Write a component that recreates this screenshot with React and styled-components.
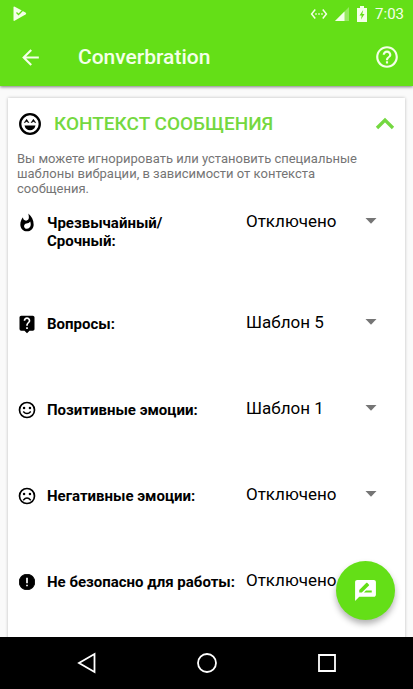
import React, { useState } from "react";
import styled, { createGlobalStyle } from "styled-components";
import {
  MdArrowBack,
  MdHelpOutline,
  MdLiveHelp,
  MdRateReview,
  MdSettingsEthernet,
  MdWhatshot,
} from "react-icons/md";

const GREEN = "#64df17";

const GlobalStyle = createGlobalStyle`
  * {
    box-sizing: border-box;
  }
  body {
    margin: 0;
    background: #fafafa;
    color: #000;
    font-family: Roboto, "Noto Sans", sans-serif;
  }
  svg {
    display: block;
    flex: none;
  }
`;

const Screen = styled.div`
  display: flex;
  flex-direction: column;
  height: 100vh;
  overflow: hidden;
`;

const Header = styled.header`
  flex: none;
  background: ${GREEN};
  color: #f4ffe9;
  box-shadow: 0 1px 3px rgba(0, 0, 0, 0.5);
  z-index: 1;
`;

const StatusBar = styled.div`
  display: flex;
  align-items: center;
  justify-content: space-between;
  height: 28px;
  padding: 0 9px 0 12px;
`;

const StatusIcons = styled.div`
  display: flex;
  align-items: center;
  gap: 7px;
`;

const Clock = styled.span`
  font-size: 15px;
  line-height: 20px;
`;

const Toolbar = styled.div`
  display: flex;
  align-items: center;
  height: 58px;
  padding: 0 13px 0 18px;
`;

const IconButton = styled.button`
  display: flex;
  padding: 0;
  border: 0;
  background: none;
  color: inherit;
`;

const AppTitle = styled.h1`
  flex: 1;
  margin: 0;
  padding-left: 35px;
  font-size: 21px;
  line-height: 28px;
  font-weight: 500;
`;

const Content = styled.main`
  flex: 1;
  min-height: 0;
  padding: 12px 8px 0;
  overflow: hidden;
`;

const Card = styled.section`
  min-height: 100%;
  padding: 12px 9px;
  background: #fff;
  box-shadow: 0 0 3px rgba(0, 0, 0, 0.25);
`;

const CardHeader = styled.div`
  display: flex;
  align-items: center;
  gap: 11px;
`;

const CardTitle = styled.h2`
  flex: 1;
  margin: 0;
  color: #74d840;
  font-size: 19px;
  line-height: 28px;
  font-weight: 500;
`;

const Collapse = styled(IconButton)`
  color: #74d840;
`;

const Hint = styled.p`
  margin: 13px 0 11px;
  padding-right: 32px;
  color: #757575;
  font-size: 13px;
  line-height: 15px;
`;

const Row = styled.div`
  display: grid;
  grid-template-columns: 20px 189px 1fr;
  column-gap: 10px;
  align-items: start;
  padding-bottom: 58px;
`;

const RowIcon = styled.span`
  padding-top: 6px;
`;

const Label = styled.label`
  padding-top: 7px;
  font-size: 15px;
  line-height: 18px;
  font-weight: 700;
  white-space: pre-line;
`;

const SelectBox = styled.div`
  display: flex;
  align-items: center;
  width: 131px;
  height: 28px;
`;

const Select = styled.select`
  flex: 1;
  min-width: 0;
  height: 28px;
  padding: 0;
  border: 0;
  background: none;
  appearance: none;
  color: #000;
  font-family: inherit;
  font-size: 17px;
`;

const Fab = styled.button`
  position: fixed;
  right: 18px;
  bottom: 69px;
  display: flex;
  align-items: center;
  justify-content: center;
  width: 59px;
  height: 59px;
  padding: 0;
  border: 0;
  border-radius: 50%;
  background: ${GREEN};
  color: #fff;
  box-shadow: 0 4px 6px rgba(0, 0, 0, 0.3);
`;

const NavBar = styled.nav`
  flex: none;
  display: flex;
  align-items: center;
  justify-content: center;
  gap: 96px;
  height: 52px;
  background: #000;
  color: #fff;
  z-index: 1;
`;

const PlayCheck = () => (
  <svg width="16" height="18" viewBox="0 0 16 18">
    <path d="M1.5 2.5Q1.500 1 2.800 1.700L13.500 7.500Q15 8.500 13.500 9.500L3 15.600Q1.500 16.400 1.500 15Z" fill="currentColor" />
    <path d="M4.500 7.500L6.500 9.500L11 5" fill="none" stroke={GREEN} strokeWidth="1.300" />
  </svg>
);

const Signal = () => (
  <svg width="14" height="14" viewBox="0 0 14 14">
    <path d="M14 0V14H0Z" fill="currentColor" opacity="0.35" />
    <path d="M9.500 4.500V14H0Z" fill="currentColor" />
  </svg>
);

const Battery = () => (
  <svg width="12" height="16" viewBox="0 0 12 16">
    <path d="M4 0h4v2h3v14H1V2h3Z" fill="currentColor" />
    <path d="M7.200 4L3.500 9.500H5.700L5 13.500L8.500 8H6.300Z" fill={GREEN} />
  </svg>
);

const Caret = () => (
  <svg width="12" height="6" viewBox="0 0 12 6">
    <path d="M0.500 0H11.500L6 5.800Z" fill="#757575" />
  </svg>
);

const Chevron = () => (
  <svg width="22" height="22" viewBox="0 0 22 22" fill="none" stroke="currentColor" strokeWidth="3.300">
    <path d="M3 15L11 7L19 15" />
  </svg>
);

const LaughingFace = () => (
  <svg width="26" height="26" viewBox="0 0 26 26">
    <circle cx="13" cy="13" r="9.800" fill="none" stroke="currentColor" strokeWidth="2.300" />
    <path
      d="M7.300 11.700L9.600 8.300L11.900 11.700L9.600 10.500ZM14.100 11.700L16.400 8.300L18.700 11.700L16.400 10.500Z"
      fill="currentColor"
      stroke="currentColor"
      strokeWidth="0.600"
    />
    <path d="M7.500 14.500H18.500Q17.300 19.300 13 19.300T7.500 14.500Z" fill="currentColor" />
  </svg>
);

const Face = ({ size, mouth }) => (
  <svg width={size} height={size} viewBox="0 0 24 24">
    <circle cx="12" cy="12" r="9" fill="none" stroke="currentColor" strokeWidth="2" />
    <circle cx="8.500" cy="9.500" r="1.500" fill="currentColor" />
    <circle cx="15.500" cy="9.500" r="1.500" fill="currentColor" />
    <path d={mouth} fill="none" stroke="currentColor" strokeWidth="1.800" />
  </svg>
);

const HappyFace = ({ size }) => <Face size={size} mouth="M7.500 13.800Q12 18.800 16.500 13.800" />;

const SadFace = ({ size }) => <Face size={size} mouth="M7.500 17Q12 12 16.500 17" />;

const Warning = ({ size }) => (
  <svg width={size} height={size} viewBox="0 0 24 24">
    <path
      d="M9 3H15L18.800 5.200L21 9V15L18.800 18.800L15 21H9L5.200 18.800L3 15V9L5.200 5.200Z"
      fill="currentColor"
      stroke="currentColor"
      strokeWidth="1"
      strokeLinejoin="round"
    />
    <path d="M11 7h2v6.500h-2ZM11 15.200h2v2h-2Z" fill="#fff" />
  </svg>
);

const OPTIONS = ["Отключено", "Шаблон 1", "Шаблон 2", "Шаблон 3", "Шаблон 4", "Шаблон 5"];

const CONTEXTS = [
  { id: "urgent", label: "Чрезвычайный/\nСрочный:", icon: MdWhatshot, value: "Отключено" },
  { id: "questions", label: "Вопросы:", icon: MdLiveHelp, value: "Шаблон 5" },
  { id: "positive", label: "Позитивные эмоции:", icon: HappyFace, value: "Шаблон 1" },
  { id: "negative", label: "Негативные эмоции:", icon: SadFace, value: "Отключено" },
  { id: "nsfw", label: "Не безопасно для работы:", icon: Warning, value: "Отключено" },
];

const ContextRow = ({ id, label, icon: Icon, value }) => {
  const [pattern, setPattern] = useState(value);

  return (
    <Row>
      <RowIcon>
        <Icon size={20} />
      </RowIcon>
      <Label htmlFor={id}>{label}</Label>
      <SelectBox>
        <Select id={id} value={pattern} onChange={(e) => setPattern(e.target.value)}>
          {OPTIONS.map((option) => (
            <option key={option}>{option}</option>
          ))}
        </Select>
        <Caret />
      </SelectBox>
    </Row>
  );
};

export default function App() {
  const [open, setOpen] = useState(true);

  return (
    <Screen>
      <GlobalStyle />
      <Header>
        <StatusBar>
          <PlayCheck />
          <StatusIcons>
            <MdSettingsEthernet size={18} />
            <Signal />
            <Battery />
            <Clock>7:03</Clock>
          </StatusIcons>
        </StatusBar>
        <Toolbar>
          <IconButton aria-label="Назад">
            <MdArrowBack size={25} />
          </IconButton>
          <AppTitle>Converbration</AppTitle>
          <IconButton aria-label="Справка">
            <MdHelpOutline size={26} />
          </IconButton>
        </Toolbar>
      </Header>
      <Content>
        <Card>
          <CardHeader>
            <LaughingFace />
            <CardTitle>КОНТЕКСТ СООБЩЕНИЯ</CardTitle>
            <Collapse aria-label="Свернуть" aria-expanded={open} onClick={() => setOpen(!open)}>
              <Chevron />
            </Collapse>
          </CardHeader>
          {open && (
            <>
              <Hint>
                Вы можете игнорировать или установить специальные шаблоны вибрации, в зависимости
                от контекста сообщения.
              </Hint>
              {CONTEXTS.map((context) => (
                <ContextRow key={context.id} {...context} />
              ))}
            </>
          )}
        </Card>
      </Content>
      <Fab aria-label="Оставить отзыв">
        <MdRateReview size={25} />
      </Fab>
      <NavBar>
        <IconButton aria-label="Назад">
          <svg width="24" height="24" viewBox="0 0 24 24" fill="none" stroke="currentColor" strokeWidth="1.800">
            <path d="M19.500 3V21L4 12Z" />
          </svg>
        </IconButton>
        <IconButton aria-label="Домой">
          <svg width="24" height="24" viewBox="0 0 24 24" fill="none" stroke="currentColor" strokeWidth="1.800">
            <circle cx="12" cy="12" r="9" />
          </svg>
        </IconButton>
        <IconButton aria-label="Недавние">
          <svg width="24" height="24" viewBox="0 0 24 24" fill="none" stroke="currentColor" strokeWidth="1.800">
            <path d="M4 4H20V20H4Z" />
          </svg>
        </IconButton>
      </NavBar>
    </Screen>
  );
}
